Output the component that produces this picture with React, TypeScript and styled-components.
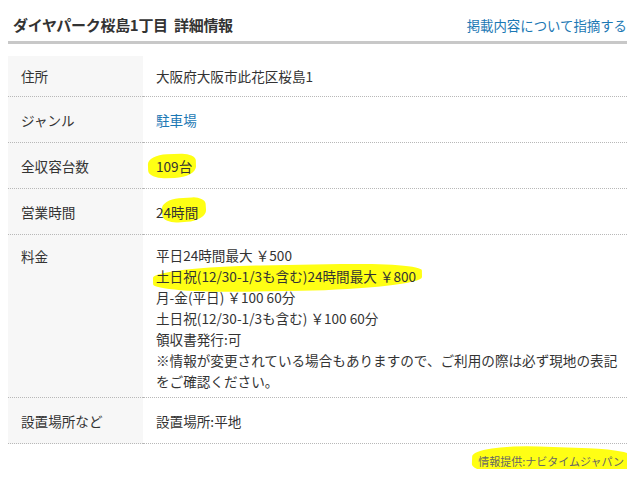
import styled, { createGlobalStyle } from "styled-components"

const GlobalStyle = createGlobalStyle`
    body {
        margin: 8px;
        background: #fff;
        font-family: "Noto Sans CJK JP", "Noto Sans", sans-serif;
        color: #333;
    }
`

const Container = styled.div`
    width: 619px;
`
const Header = styled.div`
    display: flex;
    justify-content: space-between;
    align-items: center;
    height: 33px;
    padding: 0 0 0 5px;
    border-bottom: 3px solid #c8c8c8;
`
const Title = styled.h1`
    margin: 0;
    font-size: 15px;
    font-weight: 600;
    color: #333;
    letter-spacing: -0.3px;
`
const ReportLink = styled.a`
    font-size: 13.4px;
    color: #1b78b4;
    text-decoration: none;
`
const Table = styled.div`
    margin-top: 12px;
    display: grid;
    grid-template-columns: 135px 1fr;
`
const Label = styled.div<{ $pad: string }>`
    background: #f7f7f7;
    padding: ${p => p.$pad};
    padding-left: 13px;
    font-size: 13.6px;
    line-height: 20px;
    border-bottom: 1px dotted #b8b8b8;
`
const Value = styled.div<{ $pad: string }>`
    padding: ${p => p.$pad};
    padding-left: 13px;
    font-size: 13.6px;
    line-height: 20px;
    border-bottom: 1px dotted #b8b8b8;
`
const Lines = styled.div`
    line-height: 21px;
`
const Link = styled.a`
    color: #1b78b4;
    text-decoration: none;
`
const Marked = styled.span`
    position: relative;
    z-index: 0;
`
const Marker = styled.span<{ $t: number; $l: number; $r: number; $b: number; $rot?: number }>`
    position: absolute;
    top: ${p => p.$t}px;
    left: ${p => p.$l}px;
    right: ${p => p.$r}px;
    bottom: ${p => p.$b}px;
    background: #ffff14;
    border-radius: 40% 30% 45% 35%;
    transform: rotate(${p => p.$rot ?? 0}deg);
    z-index: -1;
`
const Footer = styled.div`
    display: flex;
    justify-content: flex-end;
    padding: 9px 3px 0 0;
`
const Credit = styled.span`
    font-size: 11px;
    line-height: 16px;
    color: #666;
`

const App = () => {
    return (
        <Container>
            <GlobalStyle />
            <Header>
                <Title>ダイヤパーク桜島1丁目&nbsp;&nbsp;詳細情報</Title>
                <ReportLink href="#">掲載内容について指摘する</ReportLink>
            </Header>
            <Table>
                <Label $pad="10px 0">住所</Label>
                <Value $pad="10px 0">大阪府大阪市此花区桜島1</Value>

                <Label $pad="13px 0 12px">ジャンル</Label>
                <Value $pad="13px 0 12px"><Link href="#">駐車場</Link></Value>

                <Label $pad="13px 0 12px">全収容台数</Label>
                <Value $pad="13px 0 12px">
                    <Marked>
                        <Marker $t={-2} $l={-8} $r={-4} $b={-2} $rot={-2} />
                        109台
                    </Marked>
                </Value>

                <Label $pad="13px 0 12px">営業時間</Label>
                <Value $pad="13px 0 12px">
                    <Marked>
                        <Marker $t={-4} $l={6} $r={-8} $b={0} $rot={-4} />
                        24時間
                    </Marked>
                </Value>

                <Label $pad="11px 0">料金</Label>
                <Value $pad="10px 0 5px">
                    <Lines>
                        平日24時間最大 ￥500<br />
                        <Marked>
                            <Marker $t={-1} $l={-3} $r={-6} $b={-5} $rot={-1} />
                            土日祝(12/30-1/3も含む)24時間最大 ￥800
                        </Marked><br />
                        月-金(平日) ￥100 60分<br />
                        土日祝(12/30-1/3も含む) ￥100 60分<br />
                        領収書発行:可<br />
                        ※情報が変更されている場合もありますので、ご利用の際は必ず現地の表記をご確認ください。
                    </Lines>
                </Value>

                <Label $pad="13px 0 12px">設置場所など</Label>
                <Value $pad="13px 0 12px">設置場所:平地</Value>
            </Table>
            <Footer>
                <Credit>
                    <Marked>
                        <Marker $t={-6} $l={-6} $r={-14} $b={-9} $rot={2} />
                        情報提供:ナビタイムジャパン
                    </Marked>
                </Credit>
            </Footer>
        </Container>
    )
}

export default App
